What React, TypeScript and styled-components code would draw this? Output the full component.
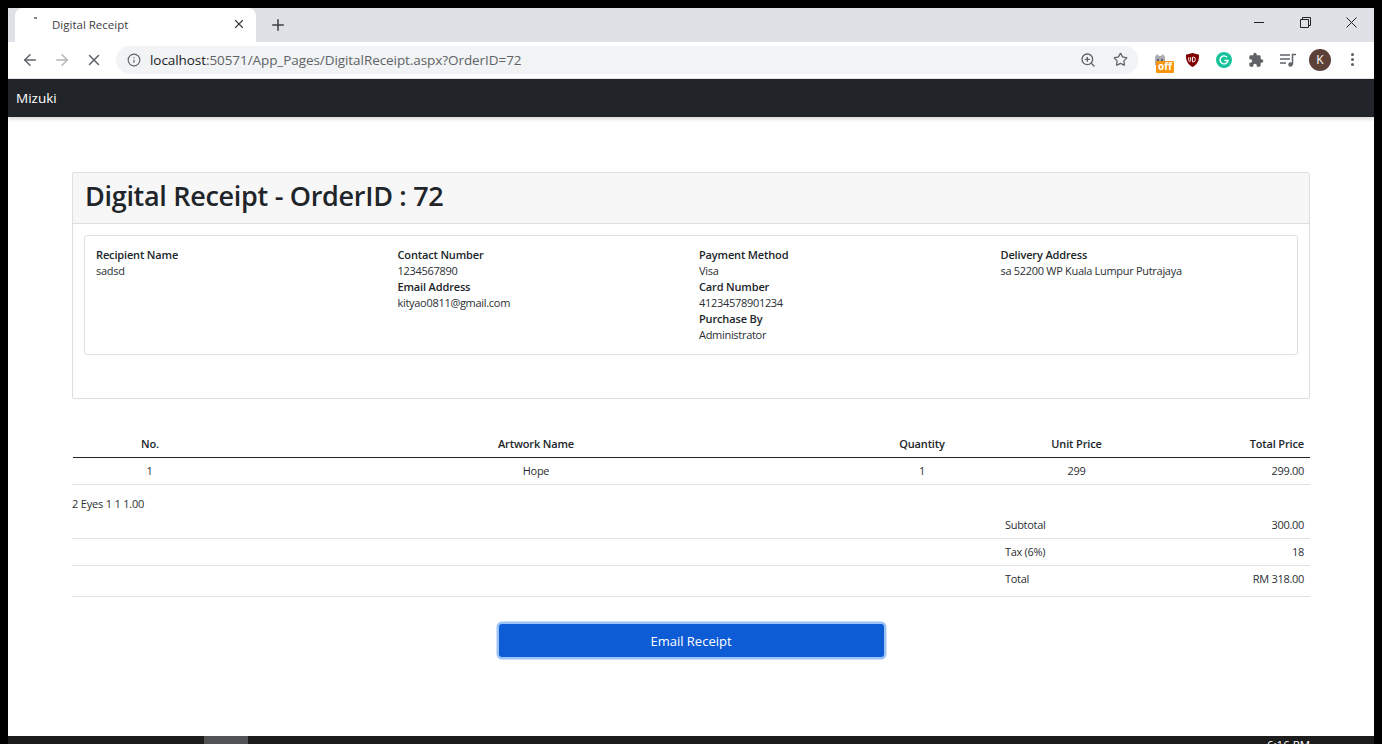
import React from 'react';
import styled, { createGlobalStyle } from 'styled-components';
import { ArrowLeft, ArrowRight, Info, MoreVertical, Plus, Star, X, ZoomIn } from 'lucide-react';

const GlobalStyle = createGlobalStyle`
  html, body {
    margin: 0;
    padding: 0;
    background: #000;
    overflow: hidden;
  }
  * { box-sizing: border-box; }
`;

const Screen = styled.div`
  width: 1382px;
  height: 744px;
  background: #000;
  padding: 8px 8px 0;
  display: flex;
  flex-direction: column;
  font-family: "Open Sans", "Noto Sans", sans-serif;
  overflow: hidden;
`;

const TabStrip = styled.div`
  height: 34px;
  flex: none;
  background: #dee1e6;
  display: flex;
  align-items: flex-end;
  padding-left: 7px;
`;

const Tab = styled.div`
  width: 241px;
  height: 34px;
  background: #fff;
  border-radius: 8px 8px 0 0;
  display: flex;
  align-items: center;
  padding: 0 10px 2px 19px;
  color: #3c4043;
  font-size: 11.5px;
`;

const Favicon = styled.span`
  width: 3px;
  height: 2px;
  background: #888;
  margin: -12px 15px 0 0;
`;

const TabTitle = styled.span`
  flex: 1;
`;

const NewTab = styled.div`
  width: 44px;
  height: 34px;
  display: flex;
  align-items: center;
  justify-content: center;
  color: #3c4043;
`;

const WindowControls = styled.div`
  margin-left: auto;
  height: 34px;
  display: flex;
  color: #222;
`;

const WindowButton = styled.div`
  width: 46px;
  height: 28px;
  display: flex;
  align-items: center;
  justify-content: center;
`;

const Toolbar = styled.div`
  height: 37px;
  flex: none;
  background: #fff;
  display: flex;
  align-items: center;
  padding: 0 0 1px 6px;
  border-bottom: 1px solid #e4e6e9;
`;

const NavButton = styled.div<{ $dim?: boolean }>`
  width: 32px;
  height: 28px;
  display: flex;
  align-items: center;
  justify-content: center;
  color: ${p => (p.$dim ? '#b4b6b9' : '#5f6368')};
`;

const Omnibox = styled.div`
  width: 1022px;
  height: 28px;
  margin-left: 6px;
  border-radius: 14px;
  background: #f1f3f4;
  display: flex;
  align-items: center;
  padding: 0 2px 0 11px;
  color: #5f6368;
`;

const Url = styled.span`
  flex: 1;
  margin-left: 9px;
  font-size: 13.5px;
  letter-spacing: -0.07px;
  color: #5f6368;
  b { font-weight: 400; color: #202124; }
`;

const OmniIcon = styled.div`
  width: 32px;
  display: flex;
  justify-content: center;
`;

const Extensions = styled.div`
  display: flex;
  align-items: center;
  margin-left: 6px;
`;

const ExtSlot = styled.div`
  position: relative;
  width: 32px;
  height: 28px;
  display: flex;
  align-items: center;
  justify-content: center;
  color: #5f6368;
`;

const OffBadge = styled.span`
  position: absolute;
  left: 12px;
  bottom: 1px;
  width: 18px;
  height: 12px;
  background: #f9960f;
  border-radius: 1px;
  color: #fff;
  font-size: 10px;
  font-weight: 700;
  line-height: 11px;
  text-align: center;
`;

const Avatar = styled.div`
  width: 22px;
  height: 22px;
  border-radius: 50%;
  background: #5d4037;
  color: #fff;
  font-size: 12px;
  display: flex;
  align-items: center;
  justify-content: center;
`;

const Navbar = styled.nav`
  position: relative;
  z-index: 1;
  height: 38px;
  flex: none;
  background: #212529;
  color: #fff;
  font-size: 13.5px;
  display: flex;
  align-items: center;
  padding-left: 8px;
  box-shadow: 0 2px 4px rgba(0, 0, 0, 0.16);
`;

const Page = styled.main`
  flex: 1;
  background: #fff;
  padding: 55px 64px 0;
  color: #2b2f33;
  font-size: 11px;
  letter-spacing: -0.3px;
  line-height: 16px;
`;

const Card = styled.section`
  height: 227px;
  border: 1px solid #dfdfdf;
  border-radius: 2px;
`;

const CardHeader = styled.header`
  height: 51px;
  background: #f7f7f7;
  border-bottom: 1px solid #dfdfdf;
  padding: 0 0 5px 12px;
  display: flex;
  align-items: center;
`;

const Title = styled.h1`
  margin: 0;
  font-size: 27px;
  font-weight: 600;
  letter-spacing: -0.3px;
  line-height: 46px;
  color: #212529;
`;

const InfoBox = styled.div`
  height: 120px;
  margin: 11px 11px 0;
  border: 1px solid #dfdfdf;
  border-radius: 3px;
  padding: 11px 11px 0;
  display: grid;
  grid-template-columns: repeat(4, 301.5px);
`;

const Label = styled.div`
  font-weight: 600;
  letter-spacing: -0.15px;
  color: #212529;
`;

const Table = styled.div`
  margin-top: 31px;
`;

const Row = styled.div<{ $height: number; $border: string }>`
  height: ${p => p.$height}px;
  border-bottom: 1px solid ${p => p.$border};
  display: grid;
  grid-template-columns: 155px 618px 154px 155px 156px;
  align-items: center;
`;

const HeadRow = styled(Row)`
  font-weight: 600;
  letter-spacing: -0.15px;
  color: #212529;
  margin-left: 1px;
  grid-template-columns: 154px 618px 154px 155px 156px;
`;

const TotalRow = styled(Row)`
  align-items: start;
  padding-top: 5px;
`;

const Cell = styled.div<{ $align?: string }>`
  padding: 0 6px;
  text-align: ${p => p.$align ?? 'center'};
`;

const LooseText = styled.div`
  height: 27px;
  padding-top: 11px;
  letter-spacing: -0.2px;
`;

const Actions = styled.div`
  margin-top: 27px;
  display: flex;
  justify-content: center;
`;

const EmailButton = styled.button`
  width: 385px;
  height: 33px;
  margin: 0;
  border: none;
  border-radius: 3px;
  background: #0d5bd5;
  color: #fff;
  font-family: inherit;
  font-size: 13px;
  box-shadow: 0 0 0 2.5px #9cc3f7;
`;

const Taskbar = styled.footer`
  height: 8px;
  flex: none;
  background: #1d1c1c;
  display: flex;
  position: relative;
  overflow: hidden;
`;

const TaskItem = styled.div`
  width: 44px;
  height: 8px;
  margin-left: 196px;
  background: #515253;
`;

const Clock = styled.span`
  position: absolute;
  right: 64px;
  top: 3px;
  color: #fff;
  font-size: 11.5px;
  line-height: 12px;
`;

const rows = [
  { label: 'Subtotal', value: '300.00' },
  { label: 'Tax (6%)', value: '18' },
];

export default function App() {
  return (
    <Screen>
      <GlobalStyle />
      <TabStrip>
        <Tab>
          <Favicon />
          <TabTitle>Digital Receipt</TabTitle>
          <X size={14} strokeWidth={2} />
        </Tab>
        <NewTab>
          <Plus size={18} strokeWidth={2} />
        </NewTab>
        <WindowControls>
          <WindowButton>
            <svg width="11" height="11" viewBox="0 0 11 11"><path d="M0 5.5h10" stroke="currentColor" /></svg>
          </WindowButton>
          <WindowButton>
            <svg width="11" height="11" viewBox="0 0 11 11" fill="none" stroke="currentColor">
              <path d="M.5 2.5h8v8h-8z" />
              <path d="M2.5 2.5v-2h8v8h-2" />
            </svg>
          </WindowButton>
          <WindowButton>
            <svg width="11" height="11" viewBox="0 0 11 11"><path d="M.5.5l10 10M10.5.5l-10 10" stroke="currentColor" /></svg>
          </WindowButton>
        </WindowControls>
      </TabStrip>

      <Toolbar>
        <NavButton><ArrowLeft size={18} strokeWidth={2} /></NavButton>
        <NavButton $dim><ArrowRight size={18} strokeWidth={2} /></NavButton>
        <NavButton><X size={18} strokeWidth={2} /></NavButton>
        <Omnibox>
          <Info size={14} strokeWidth={2} />
          <Url><b>localhost</b>:50571/App_Pages/DigitalReceipt.aspx?OrderID=72</Url>
          <OmniIcon><ZoomIn size={16} strokeWidth={2} /></OmniIcon>
          <OmniIcon><Star size={15} strokeWidth={2} /></OmniIcon>
        </Omnibox>
        <Extensions>
          <ExtSlot>
            <svg width="16" height="16" viewBox="0 0 16 16">
              <path d="M3 13V5l2-3 2 2h2l2-2 2 3v8z" fill="#a9adb3" />
              <path d="M5 7h2v2H5zM9 7h2v2H9z" fill="#5f6368" />
            </svg>
            <OffBadge>off</OffBadge>
          </ExtSlot>
          <ExtSlot>
            <svg width="15" height="16" viewBox="0 0 16 16">
              <path d="M1 2.5 8 .5l7 2c0 6-1.500 10.500-7 13-5.500-2.500-7-7-7-13z" fill="#800000" />
              <path d="M4 5v3.500c0 1.500 2 1.500 2 0V5M8 5v5h1.500c2 0 2-5 0-5z" fill="none" stroke="#fff" strokeWidth="1" />
            </svg>
          </ExtSlot>
          <ExtSlot>
            <svg width="16" height="16" viewBox="0 0 16 16">
              <circle cx="8" cy="8" r="8" fill="#15c39a" />
              <path d="M11 5.200A4 4 0 1 0 12 8.500H8.500" fill="none" stroke="#fff" strokeWidth="1.400" />
            </svg>
          </ExtSlot>
          <ExtSlot>
            <svg width="16" height="16" viewBox="0 0 24 24" fill="currentColor">
              <path d="M20.500 11H19V7a2 2 0 0 0-2-2h-4V3.500a2.500 2.500 0 0 0-5 0V5H4a2 2 0 0 0-2 2v3.800h1.500a2.700 2.700 0 0 1 0 5.400H2V20a2 2 0 0 0 2 2h3.800v-1.500a2.700 2.700 0 0 1 5.400 0V22H17a2 2 0 0 0 2-2v-4h1.500a2.500 2.500 0 0 0 0-5z" />
            </svg>
          </ExtSlot>
          <ExtSlot>
            <svg width="18" height="16" viewBox="0 0 18 16" fill="none" stroke="currentColor" strokeWidth="1.500">
              <path d="M1 3h10M1 7h10M1 11h6" />
              <path d="M13.500 12.500V2.500H17" />
              <circle cx="11.500" cy="12.500" r="1.500" fill="currentColor" />
            </svg>
          </ExtSlot>
          <ExtSlot><Avatar>K</Avatar></ExtSlot>
          <ExtSlot><MoreVertical size={17} strokeWidth={2.400} /></ExtSlot>
        </Extensions>
      </Toolbar>

      <Navbar>Mizuki</Navbar>

      <Page>
        <Card>
          <CardHeader>
            <Title>Digital Receipt - OrderID : 72</Title>
          </CardHeader>
          <InfoBox>
            <div>
              <Label>Recipient Name</Label>
              <div>sadsd</div>
            </div>
            <div>
              <Label>Contact Number</Label>
              <div>1234567890</div>
              <Label>Email Address</Label>
              <div>kityao0811@gmail.com</div>
            </div>
            <div>
              <Label>Payment Method</Label>
              <div>Visa</div>
              <Label>Card Number</Label>
              <div>41234578901234</div>
              <Label>Purchase By</Label>
              <div>Administrator</div>
            </div>
            <div>
              <Label>Delivery Address</Label>
              <div>sa 52200 WP Kuala Lumpur Putrajaya</div>
            </div>
          </InfoBox>
        </Card>

        <Table>
          <HeadRow $height={28} $border="#212529">
            <Cell>No.</Cell>
            <Cell>Artwork Name</Cell>
            <Cell>Quantity</Cell>
            <Cell>Unit Price</Cell>
            <Cell $align="right">Total Price</Cell>
          </HeadRow>
          <Row $height={27} $border="#dee2e6">
            <Cell>1</Cell>
            <Cell>Hope</Cell>
            <Cell>1</Cell>
            <Cell>299</Cell>
            <Cell $align="right">299.00</Cell>
          </Row>
          <LooseText>2 Eyes 1 1 1.00</LooseText>
          {rows.map(r => (
            <Row key={r.label} $height={27} $border="#dee2e6">
              <Cell />
              <Cell />
              <Cell />
              <Cell $align="left">{r.label}</Cell>
              <Cell $align="right">{r.value}</Cell>
            </Row>
          ))}
          <TotalRow $height={31} $border="#dee2e6">
            <Cell />
            <Cell />
            <Cell />
            <Cell $align="left">Total</Cell>
            <Cell $align="right">RM 318.00</Cell>
          </TotalRow>
        </Table>

        <Actions>
          <EmailButton>Email Receipt</EmailButton>
        </Actions>
      </Page>

      <Taskbar>
        <TaskItem />
        <Clock>6:16 PM</Clock>
      </Taskbar>
    </Screen>
  );
}
